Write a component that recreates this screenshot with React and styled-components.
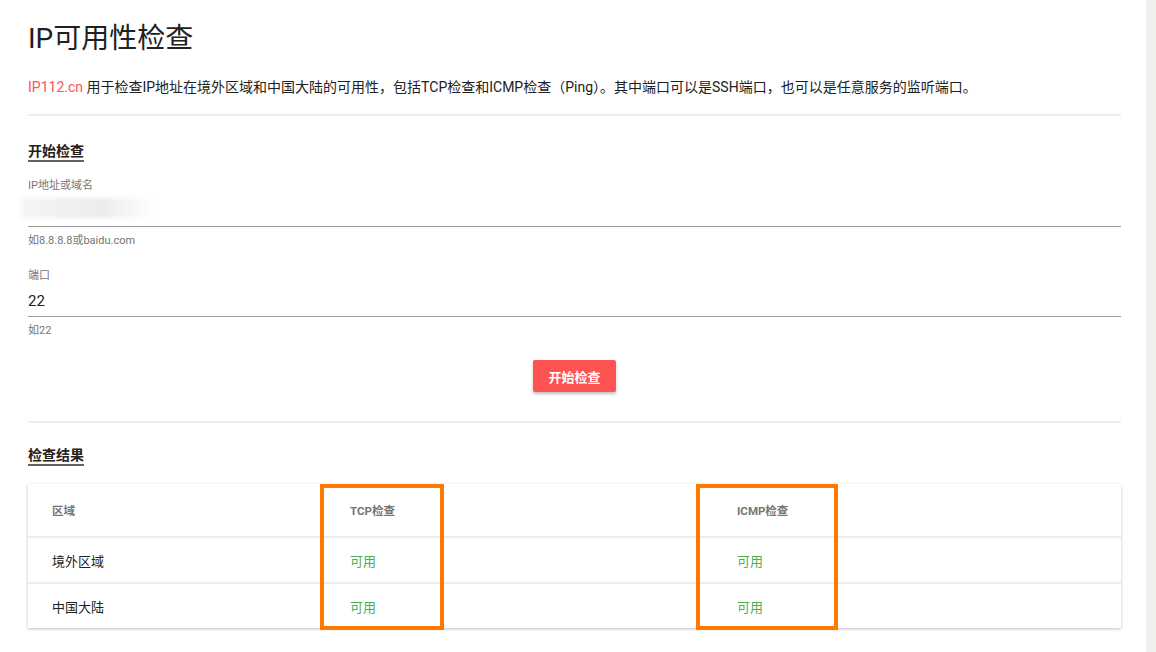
import styled, { createGlobalStyle } from 'styled-components';

const GlobalStyle = createGlobalStyle`
html, body {
  margin: 0;
  padding: 0;
  background: #fff;
}
body {
  font-family: Roboto, "Noto Sans CJK SC", sans-serif;
  color: #212121;
}
`;

const Page = styled.div`
display: flex;
width: 1156px;
height: 652px;
overflow: hidden;
`;

const Main = styled.div`
flex: 1;
padding: 21px 25px 0 28px;
`;

const ScrollTrack = styled.div`
width: 10px;
background: #f1f0ed;
`;

const Title = styled.h1`
margin: 0;
font-size: 28px;
line-height: 36px;
font-weight: 400;
color: #212121;
`;

const Intro = styled.p`
margin: 20px 0 0;
font-size: 14px;
line-height: 20px;
color: #212121;
`;

const Brand = styled.span`
color: #ff5252;
`;

const Divider = styled.hr`
margin: ${(p) => p.$top}px 0 0;
border: 0;
height: 2px;
background: #eeeeee;
`;

const SectionTitle = styled.h2`
display: inline-block;
margin: ${(p) => p.$top}px 0 0;
font-size: 14px;
line-height: 18px;
font-weight: 700;
color: #212121;
border-bottom: 2px solid #616161;
`;

const Field = styled.div`
margin-top: ${(p) => p.$top}px;
`;

const Label = styled.div`
font-size: 11px;
line-height: 14px;
color: #757575;
`;

const InputLine = styled.div`
position: relative;
height: 30px;
border-bottom: 1px solid #9e9e9e;
font-size: 15px;
line-height: 30px;
color: #212121;
margin-top: ${(p) => p.$top}px;
`;

const Blurred = styled.div`
position: absolute;
left: -6px;
top: 2px;
width: 134px;
height: 20px;
background: linear-gradient(90deg, #f4f4f4 0%, #ececec 60%, #ffffff 100%);
filter: blur(2px);
`;

const Hint = styled.div`
margin-top: 7px;
font-size: 11px;
line-height: 14px;
color: #757575;
`;

const ButtonRow = styled.div`
display: flex;
justify-content: center;
margin-top: 22px;
`;

const Button = styled.button`
width: 83px;
height: 32px;
border: 0;
border-radius: 2px;
background: #ff5252;
color: #fff;
font-family: Roboto, "Noto Sans CJK SC", sans-serif;
font-size: 13px;
font-weight: 700;
box-shadow: 0 2px 3px rgba(0, 0, 0, 0.25);
`;

const Card = styled.div`
position: relative;
margin-top: 18px;
background: #fff;
box-shadow: 0 1px 3px rgba(0, 0, 0, 0.25);
`;

const Table = styled.table`
width: 100%;
border-collapse: collapse;
table-layout: fixed;
`;

const HeadCell = styled.th`
height: 52px;
padding: 0 24px;
text-align: left;
font-size: 11.5px;
font-weight: 700;
color: #757575;
`;

const Row = styled.tr`
border-top: 2px solid #eeeeee;
`;

const Cell = styled.td`
height: 44px;
padding: 0 24px;
font-size: 13px;
color: ${(p) => (p.$ok ? '#4caf50' : '#212121')};
`;

const Highlight = styled.div`
position: absolute;
top: 0;
left: ${(p) => p.$left}px;
width: ${(p) => p.$width}px;
height: 146px;
border: 4px solid #ff7800;
box-sizing: border-box;
pointer-events: none;
`;

const rows = [
  { area: '境外区域', tcp: '可用', icmp: '可用' },
  { area: '中国大陆', tcp: '可用', icmp: '可用' },
];

export default function App() {
  return (
    <Page>
      <GlobalStyle />
      <Main>
        <Title>IP可用性检查</Title>
        <Intro>
          <Brand>IP112.cn</Brand> 用于检查IP地址在境外区域和中国大陆的可用性，包括TCP检查和ICMP检查（Ping）。其中端口可以是SSH端口，也可以是任意服务的监听端口。
        </Intro>
        <Divider $top={17} />
        <SectionTitle $top={26}>开始检查</SectionTitle>

        <Field $top={17}>
          <Label>IP地址或域名</Label>
          <InputLine $top={3}>
            <Blurred />
          </InputLine>
          <Hint>如8.8.8.8或baidu.com</Hint>
        </Field>

        <Field $top={21}>
          <Label>端口</Label>
          <InputLine $top={3}>22</InputLine>
          <Hint>如22</Hint>
        </Field>

        <ButtonRow>
          <Button>开始检查</Button>
        </ButtonRow>

        <Divider $top={29} />
        <SectionTitle $top={23}>检查结果</SectionTitle>

        <Card>
          <Table>
            <colgroup>
              <col style={{ width: '298px' }} />
              <col style={{ width: '387px' }} />
              <col />
            </colgroup>
            <thead>
              <tr>
                <HeadCell>区域</HeadCell>
                <HeadCell>TCP检查</HeadCell>
                <HeadCell>ICMP检查</HeadCell>
              </tr>
            </thead>
            <tbody>
              {rows.map((r) => (
                <Row key={r.area}>
                  <Cell>{r.area}</Cell>
                  <Cell $ok>{r.tcp}</Cell>
                  <Cell $ok>{r.icmp}</Cell>
                </Row>
              ))}
            </tbody>
          </Table>
          <Highlight $left={292} $width={124} />
          <Highlight $left={668} $width={142} />
        </Card>
      </Main>
      <ScrollTrack />
    </Page>
  );
}
